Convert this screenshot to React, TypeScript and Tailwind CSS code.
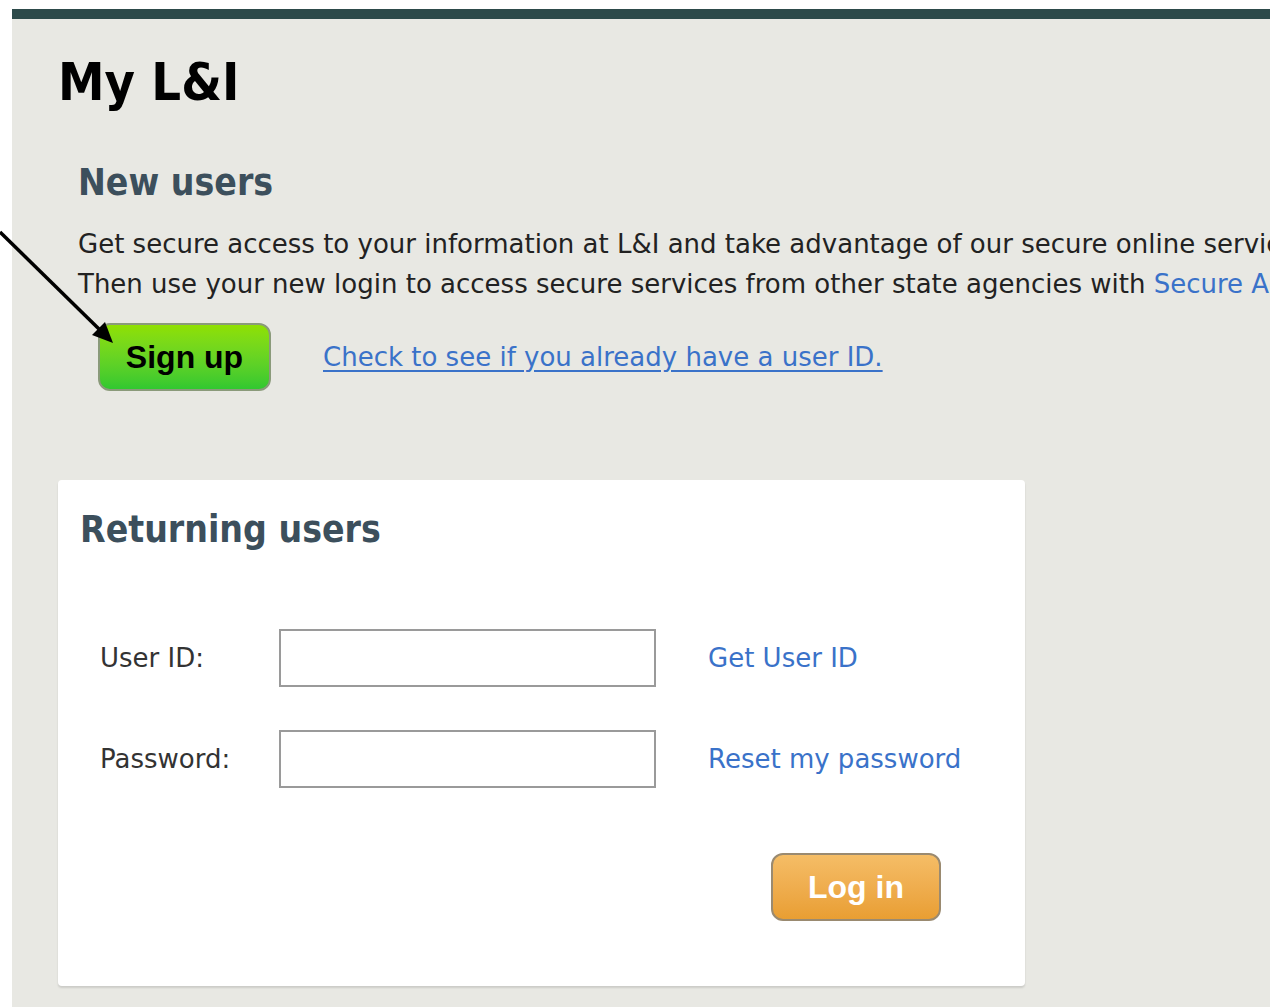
import React from 'react';

const body = "font-['DejaVu_Sans',sans-serif]";
const heading = "font-['DejaVu_Sans_Condensed','DejaVu_Sans',sans-serif] font-bold leading-none";

function Pointer() {
  // hand-drawn annotation arrow pointing at the sign-up button
  return (
    <svg className="absolute left-0 top-[228px] pointer-events-none" width="120" height="120" viewBox="0 0 120 120">
      <line x1="0" y1="4" x2="100" y2="102" stroke="#000" strokeWidth="3.5" />
      <polygon points="113,115 92,107 105,94" fill="#000" />
    </svg>
  );
}

function Field({ label, link }: { label: string; link: string }) {
  return (
    <div className="flex items-center h-[58px]">
      <label className="w-[179px] text-[26px] text-[#333]">{label}</label>
      <input type="text" className="w-[377px] h-[58px] border-2 border-[#9a9a9a] bg-white outline-none" />
      <a href="#" className="ml-[52px] text-[26px] text-[#3a72c9]">{link}</a>
    </div>
  );
}

export default function App() {
  return (
    <div className={`relative min-h-screen bg-white pt-[9px] pl-[12px] pr-[9px] ${body}`}>
      <Pointer />
      <div className="border-t-[10px] border-[#2d4a4a] bg-[#e8e8e3] h-[998px] overflow-hidden">
        <h1 className={`ml-[46px] mt-[37px] text-[52px] text-black ${heading}`}>My L&amp;I</h1>

        <section className="ml-[66px] mt-[56px]">
          <h2 className={`text-[37px] text-[#3c4f5c] ${heading}`}>New users</h2>
          <p className="mt-[23px] text-[26px] leading-[40px] text-[#222] whitespace-nowrap">
            Get secure access to your information at L&amp;I and take advantage of our secure online services.
            <br />
            Then use your new login to access secure services from other state agencies with{' '}
            <a href="#" className="text-[#3a72c9]">Secure Access Washington</a>.
          </p>
          <div className="flex items-center mt-[19px]">
            <button className="ml-[20px] w-[173px] h-[68px] rounded-[12px] border-2 border-[#8a9a7a] bg-gradient-to-b from-[#8fe000] to-[#30c830] font-['Liberation_Sans',sans-serif] font-bold text-[32px] text-black">
              Sign up
            </button>
            <a href="#" className="ml-[52px] text-[26px] text-[#3a72c9] underline underline-offset-4">
              Check to see if you already have a user ID.
            </a>
          </div>
        </section>

        <section className="ml-[46px] mt-[89px] w-[967px] h-[506px] bg-white rounded-[4px] shadow-[0_2px_2px_rgba(0,0,0,0.12)] pl-[22px] pt-[31px]">
          <h2 className={`text-[37px] text-[#3c4f5c] ${heading}`}>Returning users</h2>
          <div className="ml-[20px] mt-[81px] flex flex-col gap-[43px]">
            <Field label="User ID:" link="Get User ID" />
            <Field label="Password:" link="Reset my password" />
          </div>
          <div className="flex justify-end pr-[84px] mt-[65px]">
            <button className="w-[170px] h-[68px] rounded-[12px] border-2 border-[#9a8a70] bg-gradient-to-b from-[#f5bd66] to-[#e99e32] font-['Liberation_Sans',sans-serif] font-bold text-[32px] text-white">
              Log in
            </button>
          </div>
        </section>
      </div>
    </div>
  );
}
